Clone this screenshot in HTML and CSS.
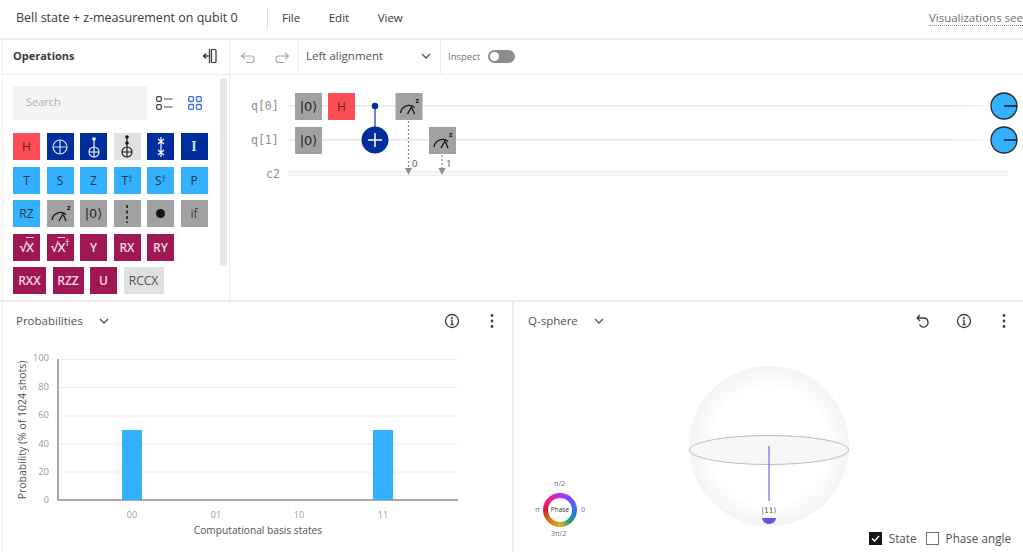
FILE: index.html
```html
<!DOCTYPE html>
<html lang="en">
  <head>
    <meta charset="UTF-8" />
    <meta name="viewport" content="width=device-width, initial-scale=1.0" />
    <title>Bell state + z-measurement on qubit 0</title>
    <link rel="stylesheet" href="styles.css">
  </head>
  <body>
    <svg class="defs" width="0" height="0">
      <symbol id="meter" viewBox="0 0 27 27">
        <path d="M5 20a8.500 8.500 0 0 1 14-5.500" fill="none" stroke="#161616" stroke-width="1.300" />
        <path d="M12 21l4.500-8M16.500 15l2.500 6" fill="none" stroke="#161616" stroke-width="1.300" />
      </symbol>
      <symbol id="chevron" viewBox="0 0 10 6">
        <path d="M1 1l4 4 4-4" fill="none" stroke="#525252" stroke-width="1.300" />
      </symbol>
      <symbol id="info" viewBox="0 0 16 16">
        <circle cx="8" cy="8" r="6.500" fill="none" stroke="#3d3d3d" stroke-width="1.300" />
        <path d="M8 7.200v4M6.400 11.500h3.200M6.800 7.200h1.200" fill="none" stroke="#3d3d3d" stroke-width="1.300" />
        <circle cx="8" cy="5" r="1" fill="#3d3d3d" />
      </symbol>
      <symbol id="dots" viewBox="0 0 4 16">
        <circle cx="2" cy="2.500" r="1.400" fill="#3d3d3d" />
        <circle cx="2" cy="8" r="1.400" fill="#3d3d3d" />
        <circle cx="2" cy="13.500" r="1.400" fill="#3d3d3d" />
      </symbol>
    </svg>

    <div class="app">
      <header class="topbar">
        <span class="doc-title">Bell state + z-measurement on qubit 0</span>
        <nav class="menu">
          <span>File</span>
          <span>Edit</span>
          <span>View</span>
        </nav>
        <span class="vis-link">Visualizations see</span>
      </header>

      <section class="workspace">
        <aside class="ops">
          <div class="ops-head">
            <strong>Operations</strong>
            <svg class="collapse" width="14" height="16" viewBox="0 0 14 16">
              <path d="M0.500 8h5M3 5.500L0.500 8 3 10.500" fill="none" stroke="#333" stroke-width="1.300" />
              <path d="M6.500 1v14" stroke="#333" stroke-width="1.300" />
              <rect x="8.500" y="1.500" width="4.500" height="13" rx="1" fill="none" stroke="#333" stroke-width="1.200" />
            </svg>
          </div>
          <div class="ops-body">
            <div class="search-row">
              <div class="search">Search</div>
              <svg class="view-icon list-icon" width="17" height="14" viewBox="0 0 17 14">
                <rect x="0.700" y="0.700" width="4.600" height="4.600" rx="1" fill="none" stroke="#444" stroke-width="1.200" />
                <rect x="0.700" y="8.700" width="4.600" height="4.600" rx="1" fill="none" stroke="#444" stroke-width="1.200" />
                <path d="M8 3h8.500M8 11h8.500" stroke="#444" stroke-width="1.200" />
              </svg>
              <svg class="view-icon grid-icon" width="14" height="14" viewBox="0 0 14 14">
                <rect x="0.700" y="0.700" width="4.800" height="4.800" rx="1" fill="none" stroke="#3a6fd8" stroke-width="1.300" />
                <rect x="8.500" y="0.700" width="4.800" height="4.800" rx="1" fill="none" stroke="#3a6fd8" stroke-width="1.300" />
                <rect x="0.700" y="8.500" width="4.800" height="4.800" rx="1" fill="none" stroke="#3a6fd8" stroke-width="1.300" />
                <rect x="8.500" y="8.500" width="4.800" height="4.800" rx="1" fill="none" stroke="#3a6fd8" stroke-width="1.300" />
              </svg>
            </div>

            <div class="gate-row">
              <div class="gate red">H</div>
              <div class="gate navy">
                <svg width="18" height="18" viewBox="0 0 18 18"><circle cx="9" cy="9" r="7" fill="none" stroke="#d0e2ff" stroke-width="1.200" /><path d="M9 2v14M2 9h14" stroke="#d0e2ff" stroke-width="1.200" /></svg>
              </div>
              <div class="gate navy">
                <svg width="18" height="24" viewBox="0 0 18 24"><circle cx="9" cy="4" r="1.800" fill="#fff" /><path d="M9 4v8M9 12v10M4 17h10" stroke="#fff" stroke-width="1.100" /><circle cx="9" cy="17" r="5" fill="none" stroke="#fff" stroke-width="1.100" /></svg>
              </div>
              <div class="gate pale">
                <svg width="18" height="26" viewBox="0 0 18 26"><circle cx="9" cy="3" r="1.800" fill="#161616" /><circle cx="9" cy="9" r="1.800" fill="#161616" /><path d="M9 3v20M4 18h10" stroke="#161616" stroke-width="1.100" /><circle cx="9" cy="18" r="5" fill="none" stroke="#161616" stroke-width="1.100" /></svg>
              </div>
              <div class="gate navy">
                <svg width="14" height="24" viewBox="0 0 14 24"><path d="M7 2v20M4 4l6 5M10 4L4 9M4 15l6 5M10 15l-6 5" fill="none" stroke="#fff" stroke-width="1.200" /></svg>
              </div>
              <div class="gate navy serif">I</div>
            </div>

            <div class="gate-row">
              <div class="gate blue">T</div>
              <div class="gate blue">S</div>
              <div class="gate blue">Z</div>
              <div class="gate blue">T<sup>†</sup></div>
              <div class="gate blue">S<sup>†</sup></div>
              <div class="gate blue">P</div>
            </div>

            <div class="gate-row">
              <div class="gate blue">RZ</div>
              <div class="gate grey">
                <svg width="27" height="27"><use href="#meter" /><text x="20" y="10" class="meter-z">z</text></svg>
              </div>
              <div class="gate grey ket">|0⟩</div>
              <div class="gate grey">
                <svg width="4" height="18" viewBox="0 0 4 18"><path d="M2 0v18" stroke="#161616" stroke-width="1.500" stroke-dasharray="3 2.500" /></svg>
              </div>
              <div class="gate grey"><span class="dot"></span></div>
              <div class="gate grey">if</div>
            </div>

            <div class="gate-row">
              <div class="gate wine"><span class="sqrt">√<span class="bar">X</span></span></div>
              <div class="gate wine"><span class="sqrt">√<span class="bar">X</span><sup>†</sup></span></div>
              <div class="gate wine">Y</div>
              <div class="gate wine">RX</div>
              <div class="gate wine">RY</div>
            </div>

            <div class="gate-row">
              <div class="gate wine rxx">RXX</div>
              <div class="gate wine rzz">RZZ</div>
              <div class="gate wine">U</div>
              <div class="gate pale rccx">RCCX</div>
            </div>
            <div class="scroll-thumb"></div>
          </div>
        </aside>

        <main class="composer">
          <div class="toolbar">
            <div class="history">
              <svg width="17" height="11" viewBox="0 0 17 11"><path d="M5 1L1.500 4 5 7M1.500 4H12a3.500 3.500 0 0 1 0 6.500H6" fill="none" stroke="#a8a8a8" stroke-width="1.200" /></svg>
              <svg width="17" height="11" viewBox="0 0 17 11"><path d="M12 1l3.500 3L12 7M15.500 4H5a3.500 3.500 0 0 0 0 6.500h6" fill="none" stroke="#a8a8a8" stroke-width="1.200" /></svg>
            </div>
            <div class="align-select">
              <span>Left alignment</span>
              <svg width="10" height="6"><use href="#chevron" /></svg>
            </div>
            <div class="inspect">
              <span>Inspect</span>
              <span class="toggle"><span class="knob"></span></span>
            </div>
          </div>

          <div class="circuit">
            <svg width="793" height="225" viewBox="230 75 793 225">
              <defs>
                <linearGradient id="wire-fade" x1="0" x2="1" y1="0" y2="0">
                  <stop offset="0.950" stop-color="#e8e8e8" />
                  <stop offset="1" stop-color="#f6f6f6" />
                </linearGradient>
              </defs>
              <text x="251" y="110" class="wire-label">q[0]</text>
              <text x="251" y="144" class="wire-label">q[1]</text>
              <text x="266" y="178" class="wire-label">c2</text>

              <rect x="288" y="105" width="702" height="1.500" fill="url(#wire-fade)" />
              <rect x="288" y="139" width="702" height="1.500" fill="url(#wire-fade)" />
              <rect x="288" y="171.500" width="720" height="1.200" fill="#e8e8e8" />
              <rect x="288" y="174.500" width="720" height="1.200" fill="#e8e8e8" />

              <rect x="295" y="93" width="27" height="27" class="g-grey" />
              <text x="308.500" y="111" class="g-ket">|0⟩</text>
              <rect x="295" y="127" width="27" height="27" class="g-grey" />
              <text x="308.500" y="145" class="g-ket">|0⟩</text>

              <rect x="328" y="93" width="27" height="27" fill="#fa4d56" />
              <text x="341.500" y="111" class="g-h">H</text>

              <path d="M375 106v22" stroke="#3a62b8" stroke-width="1.500" />
              <circle cx="375" cy="106" r="3.200" fill="#002d9c" />
              <circle cx="375" cy="140" r="13.500" fill="#002d9c" />
              <path d="M375 133v14M368 140h14" stroke="#fff" stroke-width="1.500" />

              <rect x="395.500" y="93" width="27" height="27" class="g-grey" />
              <use href="#meter" x="395.500" y="93" width="27" height="27" />
              <text x="415.500" y="103" class="meter-z">z</text>
              <rect x="429" y="127" width="27" height="27" class="g-grey" />
              <use href="#meter" x="429" y="127" width="27" height="27" />
              <text x="449" y="137" class="meter-z">z</text>

              <path d="M408.500 121v47" class="m-line" />
              <path d="M405 168h7l-3.500 7z" fill="#8d8d8d" />
              <text x="412" y="167" class="m-label">0</text>
              <path d="M442 155v13" class="m-line" />
              <path d="M438.500 168h7l-3.500 7z" fill="#8d8d8d" />
              <text x="446" y="167" class="m-label">1</text>

              <circle cx="1004" cy="106" r="13" class="disk" />
              <path d="M1004 106h13" stroke="#161616" stroke-width="1.500" />
              <circle cx="1004" cy="140" r="13" class="disk" />
              <path d="M1004 140h13" stroke="#161616" stroke-width="1.500" />
            </svg>
          </div>
        </main>
      </section>

      <section class="panels">
        <div class="panel prob-panel">
          <div class="panel-head">
            <span class="panel-title">Probabilities</span>
            <svg class="chev" width="10" height="6"><use href="#chevron" /></svg>
            <div class="panel-tools">
              <svg width="16" height="16"><use href="#info" /></svg>
              <svg class="dots" width="4" height="16"><use href="#dots" /></svg>
            </div>
          </div>
          <svg class="chart" width="509" height="217" viewBox="3 335 509 217">
            <g class="grid-lines">
              <path d="M58 359.500h400M58 387.500h400M58 416h400M58 444h400M58 472h400" />
            </g>
            <path d="M58 359v141h400" fill="none" stroke="#8d8d8d" stroke-width="1.500" />
            <rect x="122" y="430" width="20" height="70" fill="#33b1ff" />
            <rect x="373" y="430" width="20" height="70" fill="#33b1ff" />
            <g class="y-ticks">
              <text x="49" y="361">100</text>
              <text x="49" y="390">80</text>
              <text x="49" y="418">60</text>
              <text x="49" y="447">40</text>
              <text x="49" y="475">20</text>
              <text x="49" y="503">0</text>
            </g>
            <g class="x-ticks">
              <text x="132" y="518">00</text>
              <text x="216" y="518">01</text>
              <text x="299" y="518">10</text>
              <text x="383" y="518">11</text>
            </g>
            <text x="258" y="534" class="x-title">Computational basis states</text>
            <text transform="translate(26 430) rotate(-90)" class="y-title">Probability (% of 1024 shots)</text>
          </svg>
        </div>

        <div class="panel sphere-panel">
          <div class="panel-head">
            <span class="panel-title">Q-sphere</span>
            <svg class="chev" width="10" height="6"><use href="#chevron" /></svg>
            <div class="panel-tools">
              <svg width="15" height="14" viewBox="0 0 15 14"><path d="M5 1L2 4l3 3M2 4h6.500a4.500 4.500 0 1 1-4 6.500" fill="none" stroke="#3d3d3d" stroke-width="1.300" /></svg>
              <svg width="16" height="16"><use href="#info" /></svg>
              <svg class="dots" width="4" height="16"><use href="#dots" /></svg>
            </div>
          </div>
          <div class="sphere-body">
            <svg width="509" height="217" viewBox="514 335 509 217">
              <defs>
                <radialGradient id="sphere-fill" cx="0.500" cy="0.500" r="0.500">
                  <stop offset="0.700" stop-color="#ffffff" />
                  <stop offset="1" stop-color="#f4f4f4" />
                </radialGradient>
              </defs>
              <circle cx="769" cy="446" r="80" fill="url(#sphere-fill)" />
              <ellipse cx="769" cy="450" rx="79.500" ry="14.500" fill="#f6f6f6" stroke="#bdbdbd" stroke-width="1" />
              <path d="M769 446v55" stroke="#7d74e8" stroke-width="1.300" />
              <rect x="761" y="503" width="16" height="13" fill="#ffffff" />
              <text x="769" y="513" class="state-label">|11⟩</text>
              <path d="M762 518h14a7 6 0 0 1-14 0z" fill="#6552e0" />
            </svg>
            <div class="phase">
              <span class="phase-label top">π/2</span>
              <span class="phase-label left">π</span>
              <span class="phase-label right">0</span>
              <span class="phase-label bottom">3π/2</span>
              <div class="wheel"><span>Phase</span></div>
            </div>
            <div class="legend">
              <span class="check on">
                <svg width="9" height="7" viewBox="0 0 9 7"><path d="M1 3.500l2.500 2.500L8 1" fill="none" stroke="#fff" stroke-width="1.500" /></svg>
              </span>
              <span class="legend-text">State</span>
              <span class="check"></span>
              <span class="legend-text">Phase angle</span>
            </div>
          </div>
        </div>
      </section>
    </div>
  </body>
</html>
```

FILE: styles.css
```css
* {
  box-sizing: border-box;
}

body {
  margin: 0;
  font-family: "Open Sans", Arial, sans-serif;
  background-color: #fff;
  color: #525252;
  overflow: hidden;
}

.defs {
  position: absolute;
}

.app {
  width: 1023px;
  height: 552px;
  display: flex;
  flex-direction: column;
  overflow: hidden;
}

/* top bar */
.topbar {
  height: 40px;
  flex: none;
  display: flex;
  align-items: center;
  padding: 0 0 3px 16px;
  border-bottom: 2px solid #ececec;
  white-space: nowrap;
  overflow: hidden;
}

.doc-title {
  width: 252px;
  font-size: 12.5px;
  color: #393939;
  border-right: 1px solid #dcdcdc;
  line-height: 22px;
}

.menu {
  display: flex;
  gap: 28.500px;
  margin-left: 14px;
  font-size: 11.5px;
  color: #393939;
}

.vis-link {
  margin-left: auto;
  flex: none;
  font-size: 11.5px;
  color: #6f6f6f;
  border-bottom: 1px dotted #8d8d8d;
}

/* operations + composer */
.workspace {
  height: 262px;
  flex: none;
  display: flex;
  border-bottom: 2px solid #ececec;
}

.ops {
  width: 228px;
  flex: none;
  margin-left: 2px;
  border-left: 1px solid #f0f0f0;
  border-right: 1px solid #ececec;
}

.ops-head {
  height: 35px;
  display: flex;
  align-items: center;
  justify-content: space-between;
  padding: 0 12px 3px 10px;
  border-bottom: 1px solid #ececec;
  font-size: 11px;
  color: #393939;
}

.ops-head strong {
  font-weight: 700;
}

.ops-body {
  position: relative;
  padding: 11px 0 0 10px;
}

.search-row {
  display: flex;
  align-items: center;
  margin-bottom: 13px;
}

.search {
  width: 134px;
  height: 34px;
  padding-left: 13px;
  line-height: 31px;
  font-size: 11px;
  color: #b0b0b0;
  background: #f4f4f4;
}

.list-icon {
  margin-left: 9px;
}

.grid-icon {
  margin-left: 15px;
}

.gate-row {
  display: flex;
  gap: 6.500px;
  margin-bottom: 6.500px;
}

.gate {
  width: 27px;
  height: 27px;
  flex: none;
  display: flex;
  align-items: center;
  justify-content: center;
  font-size: 12px;
  color: #161616;
}

.gate sup {
  font-size: 9px;
  line-height: 0;
  position: relative;
  top: -1px;
}

.red {
  background: #fa4d56;
  color: #6d1d22;
}

.navy {
  background: #002d9c;
  color: #fff;
}

.serif {
  font-family: "Liberation Serif", serif;
  font-size: 14px;
  font-weight: 700;
  color: #d0e2ff;
}

.blue {
  background: #33b1ff;
  color: #17374d;
}

.grey {
  background: #a1a1a1;
  color: #3b3b3b;
}

.pale {
  background: #e0e0e0;
  color: #525252;
}

.wine {
  background: #9f1853;
  color: #f6dbe6;
  font-weight: 600;
}

.ket {
  font-family: "DejaVu Sans", sans-serif;
  font-size: 13px;
  color: #262626;
}

.dot {
  width: 9px;
  height: 9px;
  border-radius: 50%;
  background: #161616;
}

.sqrt {
  font-size: 13px;
  white-space: nowrap;
  letter-spacing: -0.500px;
}

.bar {
  text-decoration: overline;
}

.rxx {
  width: 33px;
}

.rzz {
  width: 31px;
}

.rccx {
  width: 40px;
}

.scroll-thumb {
  position: absolute;
  top: 3px;
  right: 2px;
  width: 7px;
  height: 188px;
  border-radius: 4px;
  background: #e6e6e6;
}

.composer {
  flex: 1;
  min-width: 0;
}

.toolbar {
  height: 35px;
  display: flex;
  align-items: stretch;
  border-bottom: 1px solid #ececec;
}

.history {
  width: 69px;
  display: flex;
  align-items: center;
  gap: 16px;
  padding-left: 10px;
  border-right: 1px solid #ececec;
}

.align-select {
  width: 142px;
  display: flex;
  align-items: center;
  justify-content: space-between;
  padding: 0 9px 3px 7px;
  font-size: 11.500px;
  color: #525252;
  border-right: 1px solid #ececec;
}

.inspect {
  display: flex;
  align-items: center;
  gap: 8px;
  padding: 0 0 2px 7px;
  font-size: 9.500px;
  color: #6f6f6f;
}

.toggle {
  width: 27px;
  height: 13px;
  padding: 2px;
  border-radius: 7px;
  background: #8d8d8d;
}

.knob {
  display: block;
  width: 9px;
  height: 9px;
  border-radius: 50%;
  background: #fff;
}

.circuit {
  height: 225px;
  overflow: hidden;
}

.circuit svg,
.chart,
.sphere-body svg {
  display: block;
}

.wire-label {
  font-family: "DejaVu Sans Mono", monospace;
  font-size: 11.500px;
  fill: #8d8d8d;
}

.g-grey {
  fill: #a1a1a1;
}

.g-ket {
  font-family: "DejaVu Sans", sans-serif;
  font-size: 13px;
  fill: #262626;
  text-anchor: middle;
}

.g-h {
  font-size: 12px;
  fill: #6d1d22;
  text-anchor: middle;
}

.meter-z {
  font-size: 7px;
  font-weight: 700;
  fill: #161616;
}

.m-line {
  fill: none;
  stroke: #8d8d8d;
  stroke-width: 1.200;
  stroke-dasharray: 2 2;
}

.m-label {
  font-size: 9.500px;
  fill: #525252;
}

.disk {
  fill: #33b1ff;
  stroke: #262626;
  stroke-width: 1.300;
}

/* bottom panels */
.panels {
  flex: 1;
  min-height: 0;
  display: flex;
}

.panel {
  min-width: 0;
}

.prob-panel {
  width: 512px;
  flex: none;
  margin-left: 2px;
  border-left: 1px solid #f0f0f0;
  border-right: 2px solid #ececec;
}

.sphere-panel {
  flex: 1;
}

.panel-head {
  height: 33px;
  display: flex;
  align-items: center;
  padding: 4px 0 0 13px;
  font-size: 11.500px;
  color: #525252;
}

.sphere-panel .panel-head {
  padding-left: 14px;
}

.chev {
  margin-left: 16px;
}

.panel-tools {
  margin-left: auto;
  display: flex;
  align-items: center;
}

.prob-panel .panel-tools {
  gap: 30px;
  padding-right: 18px;
}

.sphere-panel .panel-tools {
  gap: 26px;
  padding-right: 17px;
}

.sphere-panel .dots {
  margin-left: 4px;
}

.grid-lines path {
  fill: none;
  stroke: #ececec;
}

.y-ticks text {
  font-size: 9.500px;
  fill: #9a9a9a;
  text-anchor: end;
}

.x-ticks text {
  font-size: 9px;
  fill: #9a9a9a;
  text-anchor: middle;
}

.x-title {
  font-size: 10.200px;
  fill: #525252;
  text-anchor: middle;
}

.y-title {
  font-size: 10.500px;
  fill: #525252;
  text-anchor: middle;
}

.sphere-body {
  position: relative;
  height: 217px;
}

.state-label {
  font-family: "DejaVu Sans", sans-serif;
  font-size: 7.500px;
  fill: #525252;
  text-anchor: middle;
}

/* phase wheel sits on the sphere canvas */
.phase {
  position: absolute;
  left: 23px;
  top: 145px;
  width: 48px;
  height: 64px;
}

.wheel {
  position: absolute;
  left: 6px;
  top: 13px;
  width: 34px;
  height: 34px;
  padding: 5px;
  border-radius: 50%;
  background: conic-gradient(#b02cff, #5a5cff 60deg, #2a78d8 100deg, #1aa07a 140deg, #d8b020 180deg, #e07818 220deg, #d81e2a 270deg, #f01e90 315deg, #b02cff);
}

.wheel span {
  display: block;
  width: 24px;
  height: 24px;
  border-radius: 50%;
  background: #fff;
  font-size: 6.500px;
  line-height: 24px;
  text-align: center;
  color: #393939;
}

.phase-label {
  position: absolute;
  font-size: 7px;
  line-height: 8px;
  color: #6f6f6f;
  white-space: nowrap;
}

.phase-label.top {
  left: 17px;
  top: 0;
}

.phase-label.left {
  left: -2px;
  top: 26px;
}

.phase-label.right {
  left: 44px;
  top: 26px;
}

.phase-label.bottom {
  left: 14px;
  top: 50px;
}

.legend {
  position: absolute;
  right: 12px;
  bottom: 6px;
  display: flex;
  align-items: center;
  font-size: 11.700px;
  color: #525252;
}

.check {
  width: 13px;
  height: 13px;
  display: flex;
  align-items: center;
  justify-content: center;
  border: 1px solid #6f6f6f;
}

.check.on {
  background: #161616;
  border-color: #161616;
}

.legend-text {
  margin-left: 7px;
}

.legend-text:nth-child(2) {
  margin-right: 9px;
}
```
